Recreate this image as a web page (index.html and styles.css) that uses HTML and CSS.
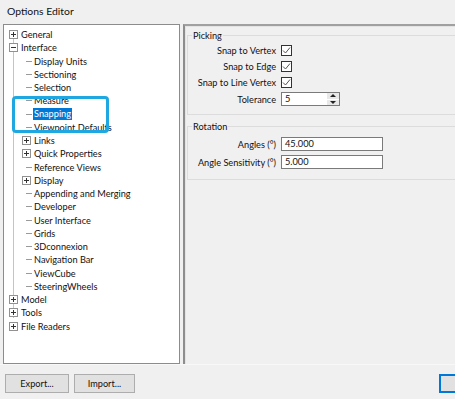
FILE: index.html
```html
<!DOCTYPE html>
<html lang="en">
<head>
    <meta charset="UTF-8">
    <meta name="viewport" content="width=device-width, initial-scale=1.0">
    <title>Options Editor</title>
    <link rel="stylesheet" href="styles.css">
</head>
<body>
    <div class="title">Options Editor</div>
    <div class="content">
        <div class="tree">
            <div class="row lvl1"><span class="box plus"></span>General</div>
            <div class="row lvl1"><span class="box"></span>Interface</div>
            <div class="row lvl2"><span class="dash"></span>Display Units</div>
            <div class="row lvl2"><span class="dash"></span>Sectioning</div>
            <div class="row lvl2"><span class="dash"></span>Selection</div>
            <div class="row lvl2"><span class="dash"></span>Measure</div>
            <div class="row lvl2"><span class="dash"></span><span class="selected">Snapping</span></div>
            <div class="row lvl2"><span class="dash"></span>Viewpoint Defaults</div>
            <div class="row lvl2 node"><span class="box plus"></span>Links</div>
            <div class="row lvl2 node"><span class="box plus"></span>Quick Properties</div>
            <div class="row lvl2"><span class="dash"></span>Reference Views</div>
            <div class="row lvl2 node"><span class="box plus"></span>Display</div>
            <div class="row lvl2"><span class="dash"></span>Appending and Merging</div>
            <div class="row lvl2"><span class="dash"></span>Developer</div>
            <div class="row lvl2"><span class="dash"></span>User Interface</div>
            <div class="row lvl2"><span class="dash"></span>Grids</div>
            <div class="row lvl2"><span class="dash"></span>3Dconnexion</div>
            <div class="row lvl2"><span class="dash"></span>Navigation Bar</div>
            <div class="row lvl2"><span class="dash"></span>ViewCube</div>
            <div class="row lvl2"><span class="dash"></span>SteeringWheels</div>
            <div class="row lvl1"><span class="box plus"></span>Model</div>
            <div class="row lvl1"><span class="box plus"></span>Tools</div>
            <div class="row lvl1"><span class="box plus"></span>File Readers</div>
        </div>
        <div class="panel">
            <fieldset class="group picking">
                <legend>Picking</legend>
                <div class="form">
                    <label>Snap to Vertex</label>
                    <span class="check"><svg width="9" height="9" viewBox="0 0 9 9"><polyline points="1,4.5 3.5,7 8,1.5" fill="none" stroke="#555" stroke-width="1"/></svg></span>
                    <label>Snap to Edge</label>
                    <span class="check"><svg width="9" height="9" viewBox="0 0 9 9"><polyline points="1,4.5 3.5,7 8,1.5" fill="none" stroke="#555" stroke-width="1"/></svg></span>
                    <label>Snap to Line Vertex</label>
                    <span class="check"><svg width="9" height="9" viewBox="0 0 9 9"><polyline points="1,4.5 3.5,7 8,1.5" fill="none" stroke="#555" stroke-width="1"/></svg></span>
                    <label>Tolerance</label>
                    <div class="spin">
                        <span class="spin-value">5</span>
                        <span class="spin-btns">
                            <span class="arrow up"></span>
                            <span class="arrow down"></span>
                        </span>
                    </div>
                </div>
            </fieldset>
            <fieldset class="group rotation">
                <legend>Rotation</legend>
                <div class="form">
                    <label>Angles (°)</label>
                    <span class="field">45.000</span>
                    <label>Angle Sensitivity (°)</label>
                    <span class="field">5.000</span>
                </div>
            </fieldset>
        </div>
    </div>
    <div class="footer">
        <button class="btn export">Export...</button>
        <button class="btn import">Import...</button>
        <span class="spacer"></span>
        <button class="btn default"></button>
    </div>
    <div class="callout"></div>
</body>
</html>
```

FILE: styles.css
```css
* {
    box-sizing: border-box;
}

body {
    margin: 0;
    width: 455px;
    height: 399px;
    overflow: hidden;
    position: relative;
    background-color: #f0f0f0;
    font-family: Lato, "Liberation Sans", sans-serif;
    font-size: 9.2px;
    color: #111;
}

.title {
    height: 24px;
    line-height: 23px;
    padding: 0 7px;
    font-size: 10.4px;
    color: #111;
}

.content {
    display: flex;
    height: 340px;
    padding-left: 3px;
}

.tree {
    width: 177px;
    flex: none;
    background-color: #fff;
    border: 1px solid #8c8c8c;
    padding-top: 3px;
    background-image: linear-gradient(#c4c4c4, #c4c4c4);
    background-size: 1px 282px;
    background-position: 9px 11px;
    background-repeat: no-repeat;
}

.row {
    height: 13.25px;
    line-height: 13.25px;
    display: flex;
    align-items: center;
    white-space: nowrap;
}

.lvl1 {
    padding-left: 5px;
}

.lvl2 {
    padding-left: 22px;
}

.lvl2.node {
    padding-left: 18px;
}

.box {
    width: 9px;
    height: 9px;
    margin-right: 3px;
    border: 1px solid #919191;
    background: #fff linear-gradient(#333, #333) center / 5px 1px no-repeat;
}

.box.plus {
    background:
        linear-gradient(#333, #333) center / 5px 1px no-repeat,
        linear-gradient(#333, #333) center / 1px 5px no-repeat,
        #fff;
}

.dash {
    width: 6px;
    height: 1px;
    margin-right: 2px;
    background-color: #9a9a9a;
}

.selected {
    background-color: #0078d7;
    color: #fff;
    padding: 0 1px;
    margin-left: -1px;
    line-height: 12px;
}

.panel {
    flex: 1;
    min-width: 0;
    overflow: hidden;
    margin-left: 3px;
    border-left: 2px solid #8d8d8d;
    border-top: 2px solid #a0a0a0;
    box-shadow: inset 1px 1px 0 #e3e3e3;
    padding: 3px 0 0 2px;
}

.group {
    width: 300px;
    margin: 0 0 5px 0;
    padding: 0 5px 7px 4px;
    border: 1px solid #dcdcdc;
    min-width: 0;
}

.group legend {
    padding: 0 1px;
    line-height: 13px;
}

.form {
    display: grid;
    grid-template-columns: 84px auto;
    column-gap: 5px;
    align-items: center;
    justify-items: start;
}

.form label {
    justify-self: end;
    white-space: nowrap;
}

.picking .form {
    grid-auto-rows: 16.3px;
}

.rotation {
    padding-top: 4px;
    padding-bottom: 10px;
}

.rotation .form {
    grid-auto-rows: 14px;
    row-gap: 4px;
}

.check {
    width: 11px;
    height: 11px;
    border: 1px solid #333;
    background-color: #fff;
    display: flex;
    align-items: center;
    justify-content: center;
}

.spin {
    width: 59px;
    height: 14px;
    border: 1px solid #7a7a7a;
    background-color: #fff;
    display: flex;
}

.spin-value {
    flex: 1;
    padding-left: 3px;
    line-height: 12px;
}

.spin-btns {
    width: 13px;
    display: flex;
    flex-direction: column;
    background-color: #e8e8e8;
    border-left: 1px solid #fff;
}

.arrow {
    flex: 1;
    display: flex;
    align-items: center;
    justify-content: center;
}

.arrow::after {
    content: "";
    border-left: 3px solid transparent;
    border-right: 3px solid transparent;
}

.arrow.up {
    border-bottom: 1px solid #fff;
}

.arrow.up::after {
    border-bottom: 3px solid #222;
}

.arrow.down::after {
    border-top: 3px solid #222;
}

.field {
    width: 102px;
    height: 14px;
    border: 1px solid #7a7a7a;
    background-color: #fff;
    padding-left: 3px;
    line-height: 12px;
}

.footer {
    display: flex;
    padding: 9px 0 0 5px;
    gap: 5px;
    border-top: 1px solid #f8f8f8;
    overflow: hidden;
}

.btn {
    height: 19px;
    padding: 0;
    font-family: inherit;
    font-size: 9.2px;
    color: #111;
    background-color: #e1e1e1;
    border: 1px solid #adadad;
}

.export {
    width: 64px;
}

.import {
    width: 61px;
}

.spacer {
    flex: 1;
}

.default {
    width: 16px;
    border: 2px solid #0078d7;
    border-right: none;
}

.callout {
    position: absolute;
    left: 12px;
    top: 96px;
    width: 97px;
    height: 37px;
    border: 3px solid #1fa7e1;
    border-radius: 4px;
}
```
